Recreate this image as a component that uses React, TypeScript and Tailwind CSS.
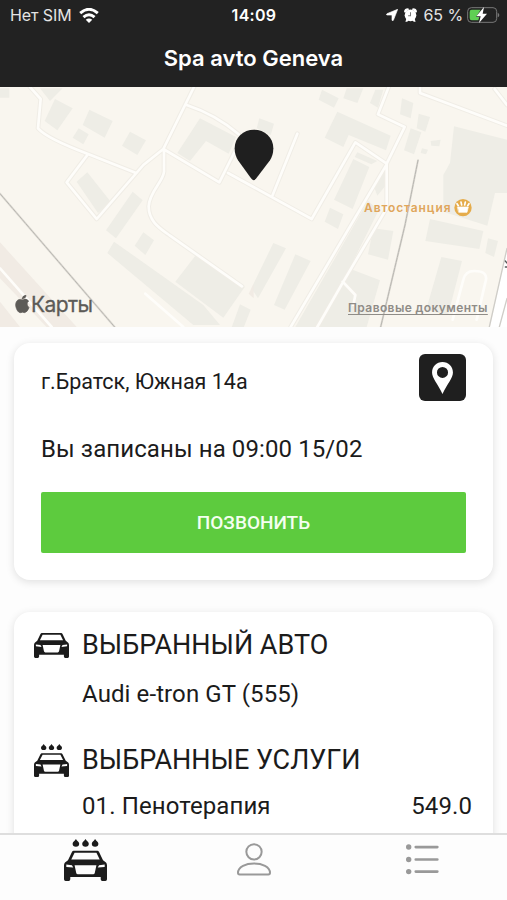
import React from 'react';

const services = [{ id: '01', name: 'Пенотерапия', price: '549.0' }];

function Car({ drops = false, className = '' }: { drops?: boolean; className?: string }) {
  return (
    <svg viewBox={drops ? '0 0 130 125' : '0 35 130 90'} className={className} fill="currentColor" preserveAspectRatio="none">
      {drops && (
        <>
          <path d="M36 0c4 7 10 9 10 14a10 9 0 0 1-20 0c0-5 6-7 10-14z" />
          <path d="M65 0c4 7 10 9 10 14a10 9 0 0 1-20 0c0-5 6-7 10-14z" />
          <path d="M94 0c4 7 10 9 10 14a10 9 0 0 1-20 0c0-5 6-7 10-14z" />
        </>
      )}
      <path
        fillRule="evenodd"
        d="M29 35H101Q104 35 106 39L118 63L127 70Q130 73 130 79V120Q130 125 125 125H116Q111 125 111 120V113H19V120Q19 125 14 125H5Q0 125 0 120V79Q0 73 3 70L12 63L24 39Q26 35 29 35ZM32 41L22 61H108L98 41ZM7 76V83L28 85L24 78ZM123 76V83L102 85L106 78ZM32 78L37 101Q38 105 42 105H88Q92 105 93 101L98 78Z"
      />
    </svg>
  );
}

function StatusBar() {
  return (
    <div className="grid h-[30px] grid-cols-[1fr_auto_1fr] items-center pl-[10px] pr-[7px] text-[16px] text-[#e4e4e4]">
      <div className="flex items-center gap-[7px]">
        <span className="tracking-[-0.1px]">Нет SIM</span>
        <svg viewBox="0 0 60 46" className="h-[15px] w-[20px]" fill="none" stroke="white" strokeWidth="9">
          <path d="M3 16Q30-8 57 16" />
          <path d="M13 28Q30 13 47 28" />
          <path d="M30 46L20 36Q30 28 40 36Z" fill="white" stroke="none" />
        </svg>
      </div>
      <span className="mr-[2px] text-[16px] font-semibold tracking-[0.3px] text-white">14:09</span>
      <div className="flex items-center justify-end">
        <svg viewBox="0 0 36 36" className="mr-[6px] h-[12px] w-[12px]" fill="white" stroke="white" strokeWidth="2">
          <path d="M35 1L22 34Q20 37 18 34V18H3Q-1 17 3 14Z" />
        </svg>
        <svg viewBox="0 0 38 40" className="mr-[7px] h-[14px] w-[13px]" fill="white">
          <circle cx="19" cy="21" r="17" />
          <path d="M0 10Q1 0 12 0L15 3L3 14ZM38 10Q37 0 26 0L23 3L35 14ZM4 40L7 31L14 36L9 40ZM34 40L31 31L24 36L29 40Z" />
          <path d="M19 12V22H12" fill="none" stroke="#777" strokeWidth="3" />
        </svg>
        <span className="mr-[4px] whitespace-nowrap text-[16px] tracking-[-0.1px]">65 %</span>
        <svg viewBox="0 0 99 48" className="h-[16px] w-[33px]">
          <rect x="2" y="2" width="87" height="44" rx="11" fill="none" stroke="#777" strokeWidth="3" />
          <path d="M92 17Q97 19 97 24T92 31Z" fill="#777" />
          <path d="M14 8H41L27 30H37L34 40H14Q8 40 8 33V15Q8 8 14 8Z" fill="#5fcf54" />
          <path d="M51 0L28 28H41L36 48L60 20H47Z" fill="white" />
        </svg>
      </div>
    </div>
  );
}

function MapView() {
  return (
    <div className="relative h-[240px] shrink-0 overflow-hidden bg-[#f9f6ef]">
      <svg viewBox="0 6 1521 720" className="h-full w-full" fill="none" strokeLinejoin="round" strokeLinecap="round">
        <g fill="#eeede6">
          <path d="M0 10H28V38H0ZM120 10H188L150 48ZM165 42L218 70L172 136L134 108ZM268 74L338 108L314 158L248 120ZM236 130L266 148L250 178L218 158ZM390 140L438 166L412 210L366 182Z" />
          <path d="M230 290L262 262L332 350L294 384ZM398 320L428 346L348 460L318 436ZM430 442L462 466L436 510L404 482ZM342 470L610 660L660 720H580L322 504ZM586 512L734 606L670 698L526 590ZM720 658L752 674L730 730H694Z" />
          <path d="M600 100L708 156L686 206L618 168L570 228L532 204Z" />
          <path d="M966 14L1016 40L1002 68L956 44ZM1040 10H1090L1072 54L1030 40ZM1126 14H1150L1134 68L1110 54ZM1012 80L1172 152L1158 196L1046 150L1030 186L974 158ZM778 100L822 116L812 150L770 130ZM1072 202L1132 228L1114 238L1064 216Z" />
          <path d="M1060 222L1108 246L1058 372L1002 344ZM990 368L1030 388L1014 432L974 410ZM820 474L858 490L774 640L754 610ZM886 508L932 528L854 674L822 660Z" />
          <path d="M1158 246V300L1132 332L1120 300ZM1104 348L1136 376L960 726H886ZM1120 430L1180 438L1164 524L1104 508ZM1042 548L1140 586L1100 726H960Z" />
          <path d="M1206 40L1240 54L1232 100L1200 88ZM1232 130L1264 142L1242 208L1212 196ZM1256 86L1290 96L1276 140L1250 130ZM1292 168L1322 164L1318 184L1294 182ZM1266 190L1284 194L1278 208L1262 204Z" />
          <path d="M1362 124L1521 164V324H1485L1462 422L1330 380V270L1350 234ZM1290 402L1450 438L1438 492L1276 468ZM1464 460L1494 468L1482 516L1456 504ZM1324 516L1386 528L1344 690L1278 676Z" />
        </g>
        <path d="M0 472L230 726H140L0 580ZM0 650L60 726H0ZM761 596V640L746 626Z" fill="#f1ebe4" />

        <g stroke="#f0ede6" strokeWidth="14">
          <path d="M90 6L122 42L114 130Q140 160 262 206L408 264M262 210L200 292L290 402L430 240L490 192L582 6M492 192V260C490 290 448 320 446 364C446 410 480 430 510 452L726 604M490 192L658 292L714 180M560 60Q650 90 716 148M684 264L935 402L1066 172L1160 236L1214 126L1134 88L1166 6M818 330L892 146" />
          <path d="M1160 238L872 726M1160 240V370L1030 590L952 726M1028 590L1066 630M1260 6V24L1521 122M1484 12L1521 60" />
        </g>
        <g stroke="#fefdfa" strokeWidth="8">
          <path d="M90 6L122 42L114 130Q140 160 262 206L408 264M262 210L200 292L290 402L430 240L490 192L582 6M492 192V260C490 290 448 320 446 364C446 410 480 430 510 452L726 604M490 192L658 292L714 180M560 60Q650 90 716 148M684 264L935 402L1066 172L1160 236L1214 126L1134 88L1166 6M818 330L892 146" />
          <path d="M1160 238L872 726M1160 240V370L1030 590L952 726M1028 590L1066 630L1060 660M1260 6V24L1521 122M1484 12L1521 60M0 550L155 726M436 626L550 726M1358 704L1390 584Q1396 558 1422 558Q1468 558 1456 592L1430 704" />
        </g>

        <path d="M0 326L344 726M1254 226L1215 420L1142 726" stroke="#dedbd4" strokeWidth="6" />
        <path d="M0 326L344 726M1254 226L1215 420L1142 726" stroke="#b9b7b2" strokeWidth="3" strokeDasharray="12 3" />
        <path d="M1521 490L1470 726H1521Z" fill="#fff" />
        <path d="M1521 490L1468 726M1521 640L1498 726" stroke="#cfcdc8" strokeWidth="4" />
        <path d="M1516 528L1521 534M1516 546H1521" stroke="#555" strokeWidth="4" />

        <path d="M761 286Q758 286 753 280L714 226Q704 210 704 190C704 157 730 134 762 134S820 157 820 190Q820 210 810 226L769 280Q764 286 761 286Z" fill="#1f1f1f" />

        <g>
          <circle cx="1389" cy="368" r="26" fill="#e5ac4b" />
          <path d="M1373 366H1405L1401 382H1377Z" fill="#fff" stroke="#fff" strokeWidth="2" />
          <path d="M1375 362L1371 356M1385 360L1383 351M1394 360L1396 351M1403 362L1407 356" stroke="#fff" strokeWidth="5" />
        </g>
        <path d="M68 645Q79 638 86 648Q76 656 87 668Q82 682 73 683Q68 680 62 683C53 684 47 668 47 660C47 645 58 640 68 645ZM67 641Q67 632 78 631Q78 641 67 641Z" fill="#5d5b57" stroke="#5d5b57" strokeWidth="2" />
      </svg>
      <span className="absolute left-[31px] top-[205px] text-[21px] leading-[26px] tracking-[-0.6px] text-[#5d5b57] [-webkit-text-stroke:0.3px_#5d5b57]">Карты</span>
      <span className="absolute left-[364px] top-[112px] text-[12px] font-semibold leading-[18px] tracking-[0.9px] text-[#e0a65c]">
        Автостанция
      </span>
      <span className="absolute left-[348px] top-[212px] whitespace-nowrap text-[12px] font-semibold leading-[18px] tracking-[0.4px] text-[#8f8c87] underline underline-offset-2">
        Правовые документы
      </span>
    </div>
  );
}

function BookingCard() {
  return (
    <section className="mx-[14px] mt-[16px] h-[237px] shrink-0 rounded-[16px] bg-white px-[27px] pt-[11px] shadow-[0_2px_9px_rgba(0,0,0,0.12)]">
      <div className="flex h-[48px] items-start justify-between">
        <p className="pt-[14px] text-[21.5px] leading-[28px]">г.Братск, Южная 14а</p>
        <button className="flex h-[47px] w-[47px] items-center justify-center rounded-[6px] bg-[#1f1f1f]">
          <svg viewBox="0 0 64 98" className="h-[32px] w-[21px]" fill="white">
            <path fillRule="evenodd" d="M32 0C14 0 0 14 0 32C0 49 17 66 32 98C47 66 64 49 64 32C64 14 50 0 32 0ZM32 15A17 17 0 1 1 32 49A17 17 0 1 1 32 15Z" />
          </svg>
        </button>
      </div>
      <p className="mt-[32px] text-[24px] leading-[30px] tracking-[0.1px]">Вы записаны на 09:00 15/02</p>
      <button className="mt-[28px] h-[61px] w-full rounded-[2px] bg-[#5dcb3e] pt-[2px] text-[19px] font-medium text-[#f4fff0]">
        ПОЗВОНИТЬ
      </button>
    </section>
  );
}

function OrderCard() {
  return (
    <section className="mx-[14px] mt-[32px] h-[260px] shrink-0 rounded-[16px] bg-white pl-[20px] pr-[21px] pt-[15px] shadow-[0_2px_9px_rgba(0,0,0,0.12)]">
      <div className="flex items-center">
        <Car className="h-[25px] w-[35px]" />
        <h2 className="ml-[13px] pt-px text-[27px] leading-[35px]">ВЫБРАННЫЙ АВТО</h2>
      </div>
      <p className="ml-[48px] mt-[16px] text-[24px] leading-[30px] tracking-[0.1px]">Audi e-tron GT (555)</p>
      <div className="mt-[33px] flex items-center">
        <Car drops className="h-[33px] w-[35px]" />
        <h2 className="ml-[13px] pt-px text-[27px] leading-[35px]">ВЫБРАННЫЕ УСЛУГИ</h2>
      </div>
      {services.map((s) => (
        <div key={s.id} className="ml-[48px] mt-[13px] flex justify-between text-[24px] leading-[30px] tracking-[0.1px]">
          <span>{s.id}. {s.name}</span>
          <span>{s.price}</span>
        </div>
      ))}
    </section>
  );
}

function TabBar() {
  return (
    <nav className="grid h-[67px] shrink-0 grid-cols-3 border-t-2 border-[#dedede] bg-[#fdfdfd] pt-[4px]">
      <button className="flex justify-center text-[#1c1c1c]">
        <Car drops className="ml-px h-[42px] w-[43px]" />
      </button>
      <button className="flex justify-center pt-[4px]">
        <svg viewBox="0 0 102 98" className="h-[33px] w-[34px]" fill="none" stroke="#999" strokeWidth="6">
          <circle cx="51" cy="26" r="23" />
          <path d="M3 89C3 70 27 61 51 61S99 70 99 89Q99 94 94 94H8Q3 94 3 89Z" />
        </svg>
      </button>
      <button className="flex justify-center pt-[5px]">
        <svg viewBox="0 0 98 92" className="h-[31px] w-[33px]" fill="#999">
          <circle cx="8" cy="9" r="8" />
          <circle cx="8" cy="46" r="8" />
          <circle cx="8" cy="82" r="8" />
          <path d="M29 9H93M29 46H93M29 82H93" stroke="#999" strokeWidth="8" strokeLinecap="round" />
        </svg>
      </button>
    </nav>
  );
}

export default function App() {
  return (
    <div className="flex h-[900px] w-full flex-col overflow-hidden bg-[#fdfdfd] font-['Roboto',sans-serif] text-[#1b1b1b]">
      <header className="h-[87px] shrink-0 bg-[#222] font-['Inter',sans-serif]">
        <StatusBar />
        <h1 className="pt-[14px] text-center text-[22px] font-semibold leading-[28px] text-white">Spa avto Geneva</h1>
      </header>
      <main className="flex min-h-0 flex-1 flex-col overflow-hidden">
        <div className="shrink-0 font-['Inter',sans-serif]">
          <MapView />
        </div>
        <BookingCard />
        <OrderCard />
      </main>
      <TabBar />
    </div>
  );
}
